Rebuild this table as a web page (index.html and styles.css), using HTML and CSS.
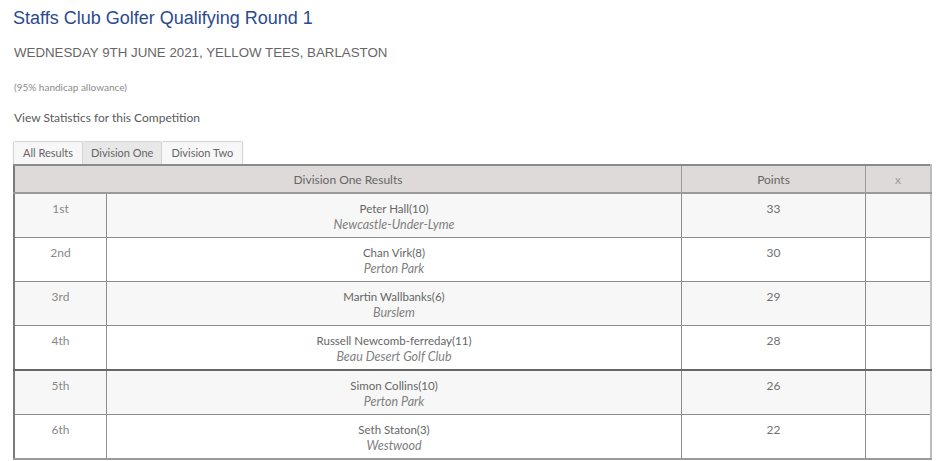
FILE: index.html
```html
<!DOCTYPE html>
<html>
<head>
<meta charset="utf-8">
<link rel="stylesheet" href="styles.css">
</head>
<body>
<div class="page">
  <h1 class="title">Staffs Club Golfer Qualifying Round 1</h1>
  <h2 class="subtitle">WEDNESDAY 9TH JUNE 2021, YELLOW TEES, BARLASTON</h2>
  <p class="note">(95% handicap allowance)</p>
  <p class="stats">View Statistics for this Competition</p>
  <div class="tabs">
    <span class="tab">All Results</span>
    <span class="tab active">Division One</span>
    <span class="tab">Division Two</span>
  </div>
  <table class="results">
    <thead>
      <tr><th colspan="2">Division One Results</th><th class="pts">Points</th><th class="x">x</th></tr>
    </thead>
    <tbody>
      <tr><td class="pos">1st</td><td class="player"><div class="name">Peter Hall(10)</div><div class="club">Newcastle-Under-Lyme</div></td><td class="score">33</td><td></td></tr>
      <tr><td class="pos">2nd</td><td class="player"><div class="name">Chan Virk(8)</div><div class="club">Perton Park</div></td><td class="score">30</td><td></td></tr>
      <tr><td class="pos">3rd</td><td class="player"><div class="name">Martin Wallbanks(6)</div><div class="club">Burslem</div></td><td class="score">29</td><td></td></tr>
      <tr class="cut"><td class="pos">4th</td><td class="player"><div class="name">Russell Newcomb-ferreday(11)</div><div class="club">Beau Desert Golf Club</div></td><td class="score">28</td><td></td></tr>
      <tr><td class="pos">5th</td><td class="player"><div class="name">Simon Collins(10)</div><div class="club">Perton Park</div></td><td class="score">26</td><td></td></tr>
      <tr><td class="pos">6th</td><td class="player"><div class="name">Seth Staton(3)</div><div class="club">Westwood</div></td><td class="score">22</td><td></td></tr>
    </tbody>
  </table>
</div>
</body>
</html>
```
FILE: styles.css
```css
html, body { margin: 0; padding: 0; background: #fff; }
body { font-family: "Lato", "Open Sans", sans-serif; color: #555; }
.page { padding: 0 8px 0 13px; }
.title {
  font-family: "Liberation Sans", Arial, sans-serif;
  font-weight: normal;
  font-size: 18px;
  color: #2b4a8e;
  margin: 0;
  padding-top: 8px;
  line-height: 20px;
}
.subtitle {
  font-family: "Liberation Sans", Arial, sans-serif;
  font-weight: normal;
  font-size: 13.3px;
  color: #666;
  margin: 17px 0 0 1px;
  line-height: 16px;
}
.note {
  font-size: 10px;
  color: #8a8a8a;
  margin: 20px 0 0 1px;
  line-height: 12px;
}
.stats {
  font-size: 12px;
  color: #5a5a5a;
  margin: 17px 0 0 1px;
  line-height: 16px;
}
.tabs {
  display: flex;
  margin-top: 15px;
  height: 23px;
}
.tab {
  font-size: 11px;
  color: #666;
  border: 1px solid #d4d4d4;
  border-bottom: none;
  background: #f7f7f7;
  padding: 0 9px;
  line-height: 22px;
  border-radius: 2px 2px 0 0;
}
.tab + .tab { border-left: none; }
.tab.active { background: #e8e8e8; padding: 0 8px; }
.results {
  border-collapse: collapse;
  width: 919px;
  border-left: 2px solid #7a7a7a;
  border-right: 2px solid #bdbdbd;
  border-bottom: 2px solid #9a9a9a;
  border-top: 2px solid #8a8a8a;
  font-size: 12px;
}
.results th {
  background: #dedad9;
  font-weight: normal;
  color: #666;
  height: 26px;
  padding: 0;
  border-bottom: 2px solid #9a9a9a;
  border-left: 1px solid #9a9a9a;
}
.results th:first-child { border-left: none; }
.results th.pts { width: 183px; }
.results th.x { width: 64px; color: #999; }
.results td {
  border-left: 1px solid #8e8e8e;
  border-top: 1px solid #8e8e8e;
  vertical-align: top;
  text-align: center;
  height: 36px;
  padding: 7px 0 0 0;
}
.results td:first-child { border-left: none; }
.results tbody tr:first-child td { border-top: none; }
.results tbody tr:nth-child(odd) td { background: #f7f7f7; }
.results tr.cut td { border-bottom: 2px solid #666; }
.pos { width: 91px; color: #888; line-height: 16px; }
.name { color: #666; line-height: 16px; font-size: 11.5px; }
.club { color: #808080; font-style: italic; line-height: 15px; font-size: 12.5px; }
.score { color: #707070; line-height: 16px; }
```
